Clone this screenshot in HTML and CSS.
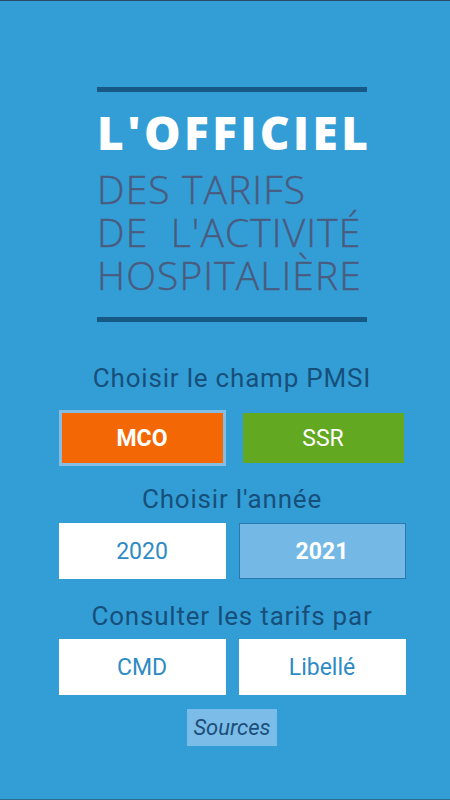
FILE: index.html
```html
<!DOCTYPE html>
<html lang="fr">
<head>
    <meta charset="UTF-8">
    <title>L'Officiel des tarifs</title>
    <link rel="stylesheet" href="styles.css">
</head>
<body>
    <div class="screen">
        <div class="logo">
            <div class="logo-bar"></div>
            <div class="logo-title">L'OFFICIEL</div>
            <div class="logo-line">DES TARIFS</div>
            <div class="logo-line">DE&nbsp; L'ACTIVITÉ</div>
            <div class="logo-line">HOSPITALIÈRE</div>
            <div class="logo-bar bottom"></div>
        </div>

        <div class="section champ">
            <div class="label">Choisir le champ PMSI</div>
            <div class="choices">
                <button class="btn mco">MCO</button>
                <button class="btn ssr">SSR</button>
            </div>
        </div>

        <div class="section annee">
            <div class="label">Choisir l'année</div>
            <div class="choices">
                <button class="btn plain">2020</button>
                <button class="btn selected">2021</button>
            </div>
        </div>

        <div class="section tarifs">
            <div class="label">Consulter les tarifs par</div>
            <div class="choices">
                <button class="btn plain">CMD</button>
                <button class="btn plain">Libellé</button>
            </div>
        </div>

        <button class="sources">Sources</button>
    </div>
</body>
</html>
```

FILE: styles.css
```css
html, body { margin: 0; padding: 0; }
body { background: #339ed6; font-family: Roboto, "Noto Sans", sans-serif; }
.screen { box-sizing: border-box; width: 450px; height: 800px; padding-left: 14px; border-top: 1px solid #2a4a66; border-bottom: 1px solid #2a6e94; display: flex; flex-direction: column; align-items: center; }

.logo { width: 270px; margin-top: 86px; display: flex; flex-direction: column; }
.logo-bar { height: 5px; background: #165985; }
.logo-bar.bottom { margin-top: 21px; }
.logo-title { color: #fff; font-family: "Open Sans", sans-serif; font-weight: 800; font-size: 46px; letter-spacing: 3.4px; line-height: 46px; margin-top: 17px; white-space: nowrap; }
.logo-line { color: #4a5b7e; font-family: "Open Sans", sans-serif; font-weight: 300; font-size: 39px; line-height: 43px; letter-spacing: 1.1px; white-space: nowrap; -webkit-text-stroke: 0.4px #4a5b7e; }
.logo-title + .logo-line { margin-top: 12px; }

.section { width: 348px; display: flex; flex-direction: column; align-items: center; }
.label { color: #174f7b; font-size: 26px; line-height: 30px; letter-spacing: 0.8px; white-space: nowrap; }
.champ .label { margin-top: 41px; margin-bottom: 17px; }
.annee .label { margin-top: 18px; margin-bottom: 9px; }
.tarifs .label { margin-top: 22px; margin-bottom: 8px; }
.choices { display: flex; justify-content: space-between; width: 347px; }
.btn { width: 167px; height: 56px; border: none; font-family: Roboto, sans-serif; font-size: 23px; color: #fff; padding: 0; }
.mco { background: #f36804; border: 3px solid #86bde2; font-weight: bold; }
.ssr { background: #62a820; width: 161px; height: 50px; margin-top: 3px; margin-right: 2px; }
.plain { background: #fff; color: #2e8bc4; }
.selected { background: #74b9e6; border: 1px solid #2a78ad; font-weight: bold; }

.sources { margin-top: 14px; background: #7bbde8; border: none; color: #1b4f7a; font-family: Roboto, sans-serif; font-style: italic; font-size: 22px; width: 90px; height: 37px; padding: 0; }
```
